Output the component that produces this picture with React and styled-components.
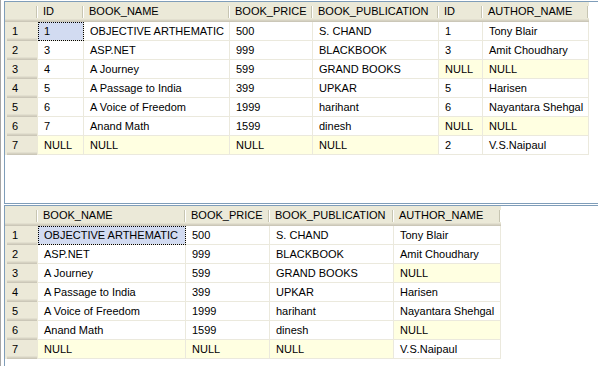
import React from "react";
import styled, { createGlobalStyle } from "styled-components";

const GlobalStyle = createGlobalStyle`
  html, body {
    margin: 0;
    padding: 0;
    background: #ffffff;
  }
  body {
    font-family: "Liberation Sans", Arial, sans-serif;
    font-size: 11px;
    color: #000;
  }
`;

const Window = styled.div`
  box-sizing: border-box;
  width: 598px;
  height: 366px;
  border-left: 1px solid #a5a5a5;
  padding: 1px 0 0 3px;
  display: flex;
  flex-direction: column;
  gap: 1px;
  overflow: hidden;
  background: #fff;
`;

const Pane = styled.div`
  box-sizing: border-box;
  border-top: 1px solid #7f9db9;
  border-left: 1px solid #7f9db9;
  border-bottom: ${(p) => (p.$closed ? "1px solid #7f9db9" : "none")};
  height: ${(p) => (p.$height ? `${p.$height}px` : "auto")};
  flex: ${(p) => (p.$height ? "none" : "1")};
  background: #fff;
  overflow: hidden;
`;

const Row = styled.div`
  display: flex;
  height: ${(p) => (p.$head ? 20 : 19)}px;
`;

const HeadCell = styled.div`
  position: relative;
  box-sizing: border-box;
  width: ${(p) => p.$w}px;
  flex: none;
  height: 20px;
  line-height: 19px;
  padding-left: 5px;
  background: #ebe9d8;
  box-shadow: inset 0 -1px #cbc7b8, inset 0 -2px #d6d2c2, inset 0 -3px #e2dfcf;
  white-space: nowrap;
  overflow: hidden;

  &::after {
    content: "";
    position: absolute;
    right: 1px;
    top: 4px;
    width: 1px;
    height: 12px;
    background: #c7c5b2;
    box-shadow: 1px 0 #fff;
  }
`;

const RowHead = styled.div`
  box-sizing: border-box;
  width: ${(p) => p.$w}px;
  flex: none;
  height: 19px;
  line-height: 18px;
  padding-left: 7px;
  background:
    linear-gradient(#cbc7b8, #cbc7b8) no-repeat 2px 100% / calc(100% - 3px) 1px,
    linear-gradient(#d6d2c2, #d6d2c2) no-repeat 2px calc(100% - 1px) / calc(100% - 3px) 1px,
    linear-gradient(#e2dfcf, #e2dfcf) no-repeat 2px calc(100% - 2px) / calc(100% - 3px) 1px,
    #ece9d8;
`;

const Cell = styled.div`
  box-sizing: border-box;
  width: ${(p) => p.$w}px;
  flex: none;
  height: 19px;
  line-height: 18px;
  padding-left: 6px;
  border-right: 1px solid #ebe9dd;
  border-bottom: 1px solid #ebe9dd;
  white-space: nowrap;
  overflow: hidden;
  background: ${(p) => (p.$selected ? "#d2dbf1" : p.$null ? "#ffffe1" : "#fff")};
  outline: ${(p) => (p.$selected ? "1px dotted #000" : "none")};
  outline-offset: -1px;
`;

function Grid({ columns, rows, selected }) {
  const [rowHead, ...cols] = columns;
  return (
    <div>
      <Row $head>
        <HeadCell $w={rowHead} />
        {cols.map((c, i) => (
          <HeadCell key={i} $w={c.w}>
            {c.label}
          </HeadCell>
        ))}
      </Row>
      {rows.map((r, ri) => (
        <Row key={ri}>
          <RowHead $w={rowHead}>{ri + 1}</RowHead>
          {r.map((v, ci) => (
            <Cell
              key={ci}
              $w={cols[ci].w}
              $null={v === null}
              $selected={ri === 0 && ci === selected}
            >
              {v === null ? "NULL" : v}
            </Cell>
          ))}
        </Row>
      ))}
    </div>
  );
}

const joinCols = [
  33,
  { label: "ID", w: 46 },
  { label: "BOOK_NAME", w: 146 },
  { label: "BOOK_PRICE", w: 83 },
  { label: "BOOK_PUBLICATION", w: 126 },
  { label: "ID", w: 44 },
  { label: "AUTHOR_NAME", w: 106 },
];

const joinRows = [
  ["1", "OBJECTIVE ARTHEMATIC", "500", "S. CHAND", "1", "Tony Blair"],
  ["3", "ASP.NET", "999", "BLACKBOOK", "3", "Amit Choudhary"],
  ["4", "A Journey", "599", "GRAND BOOKS", null, null],
  ["5", "A Passage to India", "399", "UPKAR", "5", "Harisen"],
  ["6", "A Voice of Freedom", "1999", "harihant", "6", "Nayantara Shehgal"],
  ["7", "Anand Math", "1599", "dinesh", null, null],
  [null, null, null, null, "2", "V.S.Naipaul"],
];

const bookCols = [
  33,
  { label: "BOOK_NAME", w: 148 },
  { label: "BOOK_PRICE", w: 84 },
  { label: "BOOK_PUBLICATION", w: 124 },
  { label: "AUTHOR_NAME", w: 107 },
];

const bookRows = [
  ["OBJECTIVE ARTHEMATIC", "500", "S. CHAND", "Tony Blair"],
  ["ASP.NET", "999", "BLACKBOOK", "Amit Choudhary"],
  ["A Journey", "599", "GRAND BOOKS", null],
  ["A Passage to India", "399", "UPKAR", "Harisen"],
  ["A Voice of Freedom", "1999", "harihant", "Nayantara Shehgal"],
  ["Anand Math", "1599", "dinesh", null],
  [null, null, null, "V.S.Naipaul"],
];

export default function App() {
  return (
    <>
      <GlobalStyle />
      <Window>
        <Pane $height={203} $closed>
          <Grid columns={joinCols} rows={joinRows} selected={0} />
        </Pane>
        <Pane>
          <Grid columns={bookCols} rows={bookRows} selected={0} />
        </Pane>
      </Window>
    </>
  );
}
